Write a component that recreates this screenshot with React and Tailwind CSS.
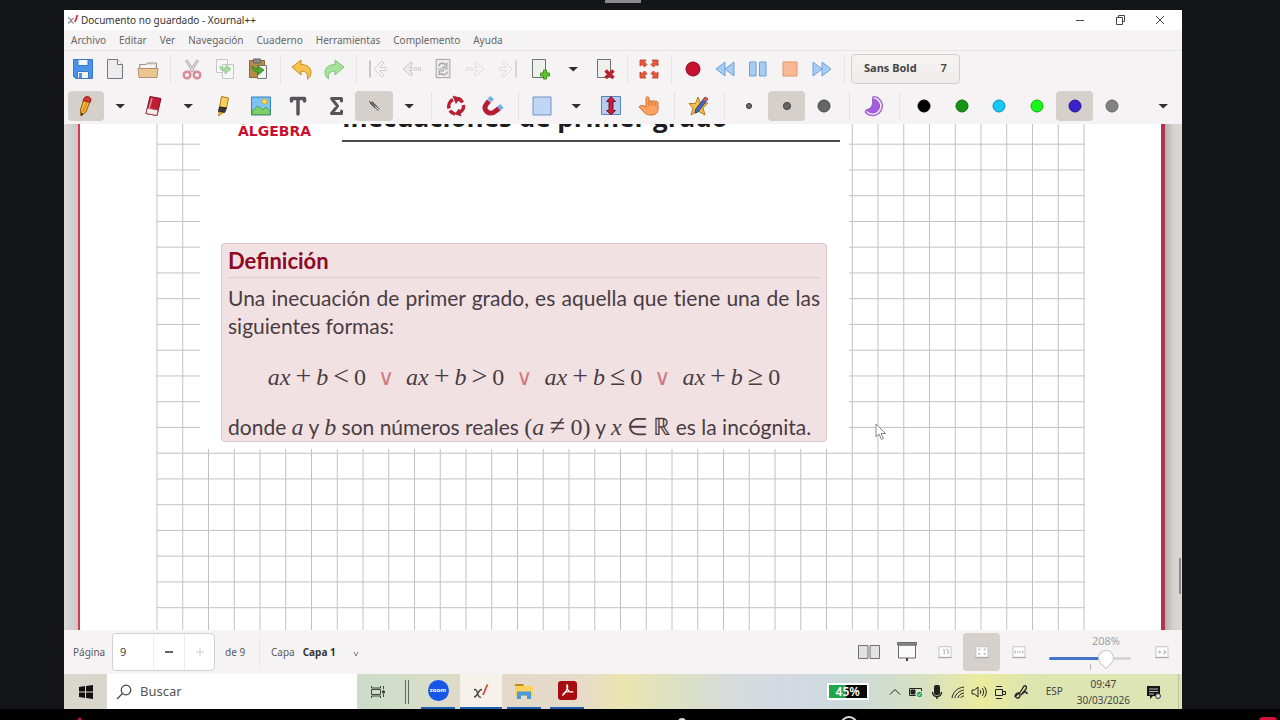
import { useState } from 'react';

// Shared wrapper for every 24px drawing in the bars
const Svg = ({ children, size = 'w-6 h-6' }) => (
  <svg viewBox="0 0 24 24" className={`${size} shrink-0`} fill="none" aria-hidden="true">
    {children}
  </svg>
);

const icons = {
  save: (
    <Svg>
      <path d="M2.500 2.500h19v19H4.500l-2-2z" fill="#4a93e8" stroke="#3a78c9" />
      <path d="M7 2.500h10v6H7z" fill="#f5f7fa" stroke="#3a78c9" />
      <path d="M6.500 14.500h11v7h-11z" fill="#f0f2f6" stroke="#3a78c9" />
      <path d="M8 16h3v5H8z" fill="#4a93e8" />
    </Svg>
  ),
  newDoc: (
    <Svg>
      <path d="M4.500 2.500h10l5 5v14h-15z" fill="#ececee" stroke="#777" />
      <path d="M14.500 2.500v5h5" fill="#fff" stroke="#777" />
    </Svg>
  ),
  open: (
    <Svg>
      <path d="M3.500 20V7.500h6l2-1.500h9V20z" fill="#e8e1d8" stroke="#9d9286" />
      <path d="M2 11.500h20l-1 9H3z" fill="#ecc592" stroke="#b3916a" />
      <path d="M5 9.500h14" stroke="#fff" strokeWidth="2" />
    </Svg>
  ),
  cut: (
    <Svg>
      <path d="M6 3l8 12M18 3l-8 12" stroke="#aaa" strokeWidth="2.800" />
      <path d="M6 3l8 12M18 3l-8 12" stroke="#e2e2e2" strokeWidth="1.200" />
      <circle cx="7" cy="18" r="3.300" stroke="#d98a95" strokeWidth="2.400" />
      <circle cx="17" cy="18" r="3.300" stroke="#d98a95" strokeWidth="2.400" />
    </Svg>
  ),
  copy: (
    <Svg>
      <path d="M3.500 2.500h11v13h-11z" fill="#f7f7f7" stroke="#c6c6c6" />
      <path d="M9.500 7.500h11v14h-11z" fill="#f7f7f7" stroke="#c6c6c6" />
      <path d="M7 9c0 4 2 5 5 5v3l6-5-5-4v3c-3 0-4 0-6-2z" fill="#a9dca3" stroke="#8cc487" strokeWidth=".8" />
    </Svg>
  ),
  paste: (
    <Svg>
      <path d="M3.500 3.500h15v17h-15z" fill="#b98a4b" stroke="#87683f" />
      <path d="M7.500 2h7v4h-7z" fill="#8b8b8b" stroke="#666" />
      <path d="M11.500 8.500h9v13h-9z" fill="#f3f3f3" stroke="#777" />
      <path d="M6 9c0 4 2 6 6 6v3l6-5-6-4v3c-3 0-4-1-6-3z" fill="#4eaa34" stroke="#2d7d19" strokeWidth=".8" />
    </Svg>
  ),
  undo: (
    <Svg>
      <path d="M2 10l9-7v4.500c7 0 10 4 10 8 0 3-1.500 5-3.500 6.500.500-5-1-8-6.500-8V18z" fill="#f8c150" stroke="#c98a1f" />
    </Svg>
  ),
  redo: (
    <Svg>
      <path d="M22 10l-9-7v4.500c-7 0-10 4-10 8 0 3 1.500 5 3.500 6.500-.500-5 1-8 6.500-8V18z" fill="#a5e29a" stroke="#83c47a" />
    </Svg>
  ),
  first: (
    <Svg>
      <path d="M4 3.500v17" stroke="#c6c6c6" strokeWidth="2" />
      <path d="M16 4l-8 8 8 8 2-2-4.500-4.500H20v-3h-6.500L18 6z" fill="#f6f5f5" stroke="#cfcfcf" />
    </Svg>
  ),
  prev: (
    <Svg>
      <path d="M12 5l-8 7 8 7 2-2-3.500-3.500H13v-3h-2.500L14 7z" fill="#ebeaea" stroke="#c9c9c9" />
      <path d="M15.500 10.500h2v3h-2zM19.500 10.500h2v3h-2z" stroke="#cfcfcf" />
    </Svg>
  ),
  gotoPage: (
    <Svg size="w-[22px] h-[22px]">
      <path d="M4.500 1.500h15v20h-15z" fill="#ececec" stroke="#9a9a9a" />
      <path d="M7 9c2-4 5-4 7-2l2-1v4h-5M17 15c-2 4-5 4-7 2l-2 1v-4h5" stroke="#a5a5a5" strokeWidth="1.500" />
      <path d="M6 12h12" stroke="#a5a5a5" />
    </Svg>
  ),
  next: (
    <Svg>
      <path d="M12 5l8 7-8 7-2-2 3.500-3.500H11v-3h2.500L10 7z" fill="#f4f2f2" stroke="#dedcdc" />
      <path d="M6.500 10.500h2v3h-2zM2.500 10.500h2v3h-2z" stroke="#e0dede" />
    </Svg>
  ),
  last: (
    <Svg>
      <path d="M20 3.500v17" stroke="#d6d4d4" strokeWidth="2" />
      <path d="M8 4l8 8-8 8-2-2 4.500-4.500H4v-3h6.500L6 6z" fill="#f6f4f4" stroke="#dddbdb" />
    </Svg>
  ),
  addPage: (
    <Svg>
      <path d="M3.500 2.500h13v18h-13z" fill="#eef0ec" stroke="#707070" />
      <path d="M14.500 13h3v3h3v3h-3v3h-3v-3h-3v-3h3z" fill="#62c52d" stroke="#3f9316" />
    </Svg>
  ),
  deletePage: (
    <Svg>
      <path d="M4.500 2.500h13v18h-13z" fill="#eef0ec" stroke="#707070" />
      <path d="M12.500 13.500l8 7.500M20.500 13.500l-8 7.500" stroke="#b5202f" strokeWidth="3.500" />
    </Svg>
  ),
  fullscreen: (
    <Svg>
      <path
        d="M3 3h6L7.500 5 10 7.500 7.500 10 5 7.500 3 9zM21 3h-6l1.500 2L14 7.500l2.500 2.500L19 7.500 21 9zM3 21h6l-1.500-2L10 16.500 7.500 14 5 16.500 3 15zM21 21h-6l1.500-2-2.500-2.500 2.500-2.500 2.500 2.500L21 15z"
        fill="#e4573d"
        stroke="#c03a25"
        strokeWidth=".8"
      />
    </Svg>
  ),
  record: (
    <Svg>
      <circle cx="12" cy="12" r="7" fill="#c4122f" stroke="#8c0d22" />
    </Svg>
  ),
  rewind: (
    <Svg>
      <path d="M12 5v14L3 12zM21 5v14l-9-7z" fill="#a8cdf5" stroke="#6d9fd6" />
    </Svg>
  ),
  pause: (
    <Svg>
      <path d="M3.500 5h6.500v14H3.500zM13.500 5H20v14h-6.500z" fill="#a8cdf5" stroke="#6d9fd6" />
    </Svg>
  ),
  stop: (
    <Svg>
      <path d="M5 5h14v14H5z" fill="#f9b995" stroke="#e09468" />
    </Svg>
  ),
  forward: (
    <Svg>
      <path d="M3 5v14l9-7zM12 5v14l9-7z" fill="#a8cdf5" stroke="#6d9fd6" />
    </Svg>
  ),
  pencil: (
    <Svg>
      <path d="M9.500 6l6.500 1.500-4 10.500L7 22l-.500-6z" fill="#f6bb3a" stroke="#8a5a12" />
      <path d="M13 7l-4 11" stroke="#e78e1c" strokeWidth="2" />
      <path d="M9.500 6c.500-5 7.500-4 7.500 0l-1 2.500-7-2z" fill="#d8322f" stroke="#8a1f1f" />
      <path d="M6.800 18.500l2.700 1.200L7 22z" fill="#3a2c1c" />
    </Svg>
  ),
  eraser: (
    <Svg>
      <path d="M8 2.500l11 2-4 17-11-2z" fill="#c11c33" stroke="#7a1020" />
      <path d="M5.200 14l11 2-1.400 5.500-10.800-2z" fill="#f6e9ea" stroke="#9a4a55" />
      <path d="M10 4l-3 11" stroke="#e88c98" strokeWidth="1.500" />
    </Svg>
  ),
  highlighter: (
    <Svg>
      <path d="M10.500 2.500l7 1.500-2 10-7-1z" fill="#fbcf5e" stroke="#a87a18" />
      <path d="M8.500 13l7 1-2 4.500-6-1z" fill="#3a3a3a" stroke="#222" />
      <path d="M8 18l4 .800L7.500 22z" fill="#f5c33c" stroke="#a87a18" strokeWidth=".8" />
    </Svg>
  ),
  image: (
    <Svg>
      <path d="M2.500 3h19v18h-19z" fill="#7cc3f5" stroke="#3b7fb8" />
      <path d="M3 17l6-5 5 4 3-3 4 4v3.500H3z" fill="#7ed069" stroke="#55a142" />
      <circle cx="15.500" cy="7.500" r="2.500" fill="#fbe06a" stroke="#d6a82a" />
    </Svg>
  ),
  text: (
    <Svg>
      <path d="M5.500 7V4.500h13V7M12 4.500v15.500" stroke="#555557" strokeWidth="3.500" strokeLinecap="round" strokeLinejoin="round" />
    </Svg>
  ),
  sigma: (
    <Svg>
      <path d="M17.500 7V4.500h-10l6 7.500-6 7.500h10V17" stroke="#555557" strokeWidth="3" strokeLinecap="round" strokeLinejoin="round" />
    </Svg>
  ),
  wand: (
    <Svg>
      <path d="M9 8l8 8" stroke="#777" strokeWidth="3" />
      <path d="M8 9l5 5M10 8l5 5M7 7l2 2" stroke="#444" />
      <path d="M13 12l4 4" stroke="#e2e2e2" />
    </Svg>
  ),
  rotate: (
    <Svg>
      <path d="M5 14.500a7.500 7.500 0 0 1 4-8.800M19.500 11a7.500 7.500 0 0 1-4 7.500M11 20a7.500 7.500 0 0 1-5-3.500M14 4.500a7.500 7.500 0 0 1 4.500 4" stroke="#bb2036" strokeWidth="3.500" />
      <path d="M9 2l7 2-4 5.500zM17 22l-6-2 4-5z" fill="#bb2036" stroke="#861426" strokeWidth=".6" />
    </Svg>
  ),
  magnet: (
    <Svg>
      <path d="M8 7l-2.500 3c-5 6 3.500 12 8.500 7.500l4-3" stroke="#b91b33" strokeWidth="5" />
      <path d="M11 3.500L8.500 6.500M21 12l-3 2.500" stroke="#6faef0" strokeWidth="5" />
    </Svg>
  ),
  select: (
    <Svg>
      <path d="M3 3h18v18H3z" fill="#bfd6f4" stroke="#6f93c6" />
    </Svg>
  ),
  vspace: (
    <Svg>
      <path d="M2.500 2.500h19v18h-19z" fill="#b3cdf2" stroke="#5f83b6" />
      <path d="M12 2.500l4.500 5H14v9h2.500L12 21l-4.500-4.500H10v-9H7.500z" fill="#c41f3d" stroke="#7d1226" />
    </Svg>
  ),
  hand: (
    <Svg>
      <path d="M9 13V4.500C9 2 12 2 12 4.500V8c0-2 3-2 3 0 0-2 3-1.500 3 0 0-1.500 3-1 3 1v6c0 4-3 6-6 6-5 0-7-1-9-4l-4-4c1-2 4-2 7 0z" fill="#fba163" stroke="#d6702b" />
      <path d="M12 8v4M15 8v4M18 8v4" stroke="#d6702b" />
    </Svg>
  ),
  favourite: (
    <Svg>
      <path d="M11 3l2.500 6H21l-5 5 2 7-7-4-7 4 2-7-4-4.500h6.500z" fill="#f7bf4c" stroke="#b07c1c" />
      <path d="M18 3l3 2-10 13-3 1 .500-3.500z" fill="#4c65b8" stroke="#2f3f7d" />
      <path d="M18 3l3 2-2 2.500-3-2z" fill="#cf5a4c" />
    </Svg>
  ),
  setsquare: (
    <Svg>
      <path d="M11 2.500a9.500 9.500 0 1 1-8 15" stroke="#a968dd" strokeWidth="1.500" />
      <path d="M10.500 5a7 7 0 1 1-6 10.500c4 0 7-4 6-10.500z" fill="#a45ddc" stroke="#8f4fc6" />
      <path d="M11 2.500v3M3 17.500l2.500-1.500" stroke="#a968dd" strokeWidth="1.500" />
    </Svg>
  ),
  arrow: (
    <Svg>
      <path d="M7.500 10h9.500l-4.750 4.500z" fill="#2f2f2f" />
    </Svg>
  ),
  pair: (
    <Svg>
      <path d="M1.500 5.500h9.500v13H1.500zM13 5.500h9.500v13H13z" fill="#e2e2e2" stroke="#707070" />
    </Svg>
  ),
  screen: (
    <Svg>
      <path d="M3.500 5h17v13h-17z" fill="#fafafa" stroke="#6a6a6a" />
      <path d="M2.500 2.500h19v2.500h-19z" fill="#888" stroke="#6a6a6a" />
      <path d="M12 18v3" stroke="#444" strokeWidth="2" />
    </Svg>
  ),
};

const zoomBox = (d) => (
  <Svg size="w-[18px] h-[18px]">
    <path d="M4 5h16v14H4z" fill="#fff" stroke="#c4c2c2" strokeWidth="1.300" />
    <path d="M3 19.500h18" stroke="#a9a7a7" strokeWidth="1.500" />
    <path d={d} stroke="#b3b1b1" strokeWidth="1.500" />
  </Svg>
);

const dot = (r, fill, stroke) => (
  <Svg>
    <circle cx="12" cy="12" r={r} fill={fill} stroke={stroke} />
  </Svg>
);

const ToolButton = ({ label, children, active, width = 'flex-1', height = 'h-[30px]' }) => (
  <button
    aria-label={label}
    className={`${width} ${height} flex items-center justify-center rounded ${active ? 'bg-[#d5d0cc]' : ''}`}
  >
    {children}
  </button>
);

const Sep = () => (
  <div className="w-3 flex justify-center shrink-0">
    <div className="w-px h-7 bg-[#e6e2e2]" />
  </div>
);

const Group = ({ width, items }) => (
  <div className={`${width} flex shrink-0`}>
    {items.map(([name, label, active]) => (
      <ToolButton key={name} label={label} active={active}>
        {icons[name]}
      </ToolButton>
    ))}
  </div>
);

const Dropdown = ({ label }) => (
  <ToolButton label={label} width="w-8 shrink-0">
    {icons.arrow}
  </ToolButton>
);

const menus = ['Archivo', 'Editar', 'Ver', 'Navegación', 'Cuaderno', 'Herramientas', 'Complemento', 'Ayuda'];

const colors = [
  ['Negro', '#000000', '#000000'],
  ['Verde', '#149414', '#0c6a0c'],
  ['Celeste', '#14c8f8', '#0f8fb2'],
  ['Verde claro', '#18f818', '#11b011'],
  ['Azul', '#3a22c8', '#25168a'],
  ['Gris', '#828282', '#636363'],
];

const TitleBar = () => (
  <header className="h-5 bg-white flex items-center pl-[3px] pr-[2px] shrink-0">
    <svg viewBox="0 0 12 12" className="w-3 h-3 mr-[2px]" fill="none" aria-hidden="true">
      <path d="M1 4c3-1 3 6 6 5M7 4C4 5 4 9 1 9" stroke="#8a8a8a" strokeWidth="1.300" />
      <path d="M10.500 1L8 8" stroke="#d4313f" strokeWidth="1.800" />
    </svg>
    <h1 className="text-[10px] leading-5 text-[#333]">Documento no guardado - Xournal++</h1>
    <div className="ml-auto flex">
      <button aria-label="Minimizar" className="w-10 h-5 flex items-center justify-center">
        <svg viewBox="0 0 10 10" className="w-[10px] h-[10px]" stroke="#444"><path d="M1 5.500h8" /></svg>
      </button>
      <button aria-label="Restaurar" className="w-10 h-5 flex items-center justify-center">
        <svg viewBox="0 0 10 10" className="w-[10px] h-[10px]" stroke="#444" fill="none">
          <path d="M1.500 2.500h6v7h-6zM3.500 2.500v-2h6v6h-2" />
        </svg>
      </button>
      <button aria-label="Cerrar" className="w-10 h-5 flex items-center justify-center">
        <svg viewBox="0 0 10 10" className="w-[10px] h-[10px]" stroke="#444"><path d="M1 1l8 8M9 1L1 9" /></svg>
      </button>
    </div>
  </header>
);

const MainToolbar = () => (
  <div className="h-9 pl-[3px] flex items-center border-t border-[#e9e5e5] shrink-0">
    <Group width="w-[97px]" items={[['save', 'Guardar'], ['newDoc', 'Nuevo'], ['open', 'Abrir']]} />
    <Sep />
    <Group width="w-[98px]" items={[['cut', 'Cortar'], ['copy', 'Copiar'], ['paste', 'Pegar']]} />
    <Sep />
    <Group width="w-16" items={[['undo', 'Deshacer'], ['redo', 'Rehacer']]} />
    <Sep />
    <Group
      width="w-[195px]"
      items={[
        ['first', 'Primera página'],
        ['prev', 'Página anterior'],
        ['gotoPage', 'Ir a la página'],
        ['next', 'Página siguiente'],
        ['last', 'Última página'],
        ['addPage', 'Añadir página'],
      ]}
    />
    <Dropdown label="Tipo de página" />
    <Group width="w-8" items={[['deletePage', 'Borrar página']]} />
    <Sep />
    <Group width="w-8" items={[['fullscreen', 'Pantalla completa']]} />
    <Sep />
    <Group
      width="w-[161px]"
      items={[
        ['record', 'Grabar'],
        ['rewind', 'Retroceder'],
        ['pause', 'Pausa'],
        ['stop', 'Detener'],
        ['forward', 'Avanzar'],
      ]}
    />
    <Sep />
    <button className="h-[30px] ml-px px-3 flex items-center gap-6 rounded border border-[#d3cecd] bg-gradient-to-b from-[#f6f4f3] to-[#efeceb] text-[11px] font-bold text-[#444]">
      <span>Sans Bold</span>
      <span className="font-semibold">7</span>
    </button>
  </div>
);

const PenToolbar = () => (
  <div className="h-[38px] pt-[2px] pl-1 pr-[3px] flex items-center shrink-0">
    <Group width="w-9" items={[['pencil', 'Lápiz', true]]} />
    <Dropdown label="Opciones del lápiz" />
    <Group width="w-9" items={[['eraser', 'Borrador']]} />
    <Dropdown label="Opciones del borrador" />
    <Group
      width="w-[189px]"
      items={[
        ['highlighter', 'Resaltador'],
        ['image', 'Imagen'],
        ['text', 'Texto'],
        ['sigma', 'Fórmula'],
        ['wand', 'Formas', true],
      ]}
    />
    <Dropdown label="Opciones de formas" />
    <Sep />
    <Group width="w-[75px]" items={[['rotate', 'Ajustar rotación'], ['magnet', 'Ajustar a la cuadrícula']]} />
    <Sep />
    <Group width="w-9" items={[['select', 'Seleccionar']]} />
    <Dropdown label="Opciones de selección" />
    <Group width="w-[76px]" items={[['vspace', 'Espacio vertical'], ['hand', 'Mano']]} />
    <Sep />
    <Group width="w-[38px]" items={[['favourite', 'Predeterminado']]} />
    <Sep />
    <div className="w-[113px] flex shrink-0">
      <ToolButton label="Fino">{dot(2.6, '#666', '#444')}</ToolButton>
      <ToolButton label="Medio" active>{dot(3.6, '#666', '#444')}</ToolButton>
      <ToolButton label="Grueso">{dot(6, '#666', '#444')}</ToolButton>
    </div>
    <Sep />
    <Group width="w-[38px]" items={[['setsquare', 'Transportador']]} />
    <Sep />
    <div className="w-[226px] flex shrink-0">
      {colors.map(([name, fill, stroke]) => (
        <ToolButton key={name} label={name} active={name === 'Azul'}>
          {dot(6, fill, stroke)}
        </ToolButton>
      ))}
    </div>
    <div className="ml-auto">
      <Dropdown label="Más colores" />
    </div>
  </div>
);

// Squared paper: 37 vertical rules, rows every 25.75 units
const Grid = () => (
  <svg className="absolute top-0 left-[76px] w-[930px] h-full" aria-hidden="true">
    {Array.from({ length: 37 }, (_, i) => (
      <line key={`v${i}`} x1={1 + i * 25.75} x2={1 + i * 25.75} y1="0" y2="100%" stroke="#c2c2c2" />
    ))}
    {Array.from({ length: 40 }, (_, i) => (
      <line key={`h${i}`} x1="0.500" x2="928.500" y1={20.2 + i * 25.75} y2={20.2 + i * 25.75} stroke="#c2c2c2" />
    ))}
  </svg>
);

const V = ({ children }) => <i className="font-['Liberation_Serif',serif] text-2xl leading-7">{children}</i>;
const M = ({ children }) => <span className="font-['Liberation_Serif',serif] text-2xl leading-7">{children}</span>;
const Op = ({ children }) => (
  <span className="font-['Liberation_Serif',serif] text-[28px] leading-7">{children}</span>
);

const Inequality = ({ sign }) => (
  <span className="flex items-baseline gap-[5px]">
    <V>ax</V>
    <Op>+</Op>
    <V>b</V>
    <Op>{sign}</Op>
    <M>0</M>
  </span>
);

const Or = () => <span className="font-['DejaVu_Sans',sans-serif] text-[22px] leading-7 text-[#cf7a80]">∨</span>;

const Slide = () => (
  <article className="relative ml-[120px] w-[649px] h-[325px] bg-white overflow-hidden">
    <div className="flex -mt-4 items-end">
      <div className="ml-[38px] w-[104px] pb-[3px] font-['DejaVu_Sans',sans-serif] text-sm leading-4 font-bold text-[#c8102e]">
        ÁLGEBRA
      </div>
      <h2 className="w-[498px] h-[34px] border-b-2 border-[#4a4a4a] font-['Open_Sans',sans-serif] text-[26px] leading-[18px] font-bold text-[#1c1c1c] whitespace-nowrap">
        Inecuaciones de primer grado
      </h2>
    </div>
    <section className="ml-[21px] mr-[22px] mt-[101px] h-[199px] px-[6px] rounded border border-[#dcc5c9] bg-[#f2e1e3] font-['Lato',sans-serif] text-[21px] leading-7 text-[#483c42]">
      <h3 className="h-[34px] leading-[34px] text-[22px] font-bold text-[#8c0a25] border-b border-[#e0cdd0]">Definición</h3>
      <p className="mt-[6px] text-justify [font-variant-ligatures:none]">
        Una inecuación de primer grado, es aquella que tiene una de las siguientes formas:
      </p>
      <div className="mt-[22px] h-7 flex items-baseline justify-center gap-3">
        <Inequality sign="<" />
        <Or />
        <Inequality sign=">" />
        <Or />
        <Inequality sign="≤" />
        <Or />
        <Inequality sign="≥" />
      </div>
      <p className="mt-[22px] whitespace-nowrap">
        donde <V>a</V> y <V>b</V> son números reales <M>(</M><V>a</V> <Op>≠</Op> <M>0)</M> y <V>x</V> <M>∈</M> <M>ℝ</M> es la incógnita.
      </p>
    </section>
  </article>
);

const StatusBar = () => {
  const [page, setPage] = useState(9);
  const [zoom, setZoom] = useState(74);
  return (
    <div className="h-11 bg-[#f6f3f4] flex items-center px-[9px] text-[10px] text-[#5a5a5a] shrink-0">
      <label htmlFor="page" className="w-[39px]">Página</label>
      <div className="h-[38px] flex items-stretch rounded border border-[#d5d1d0] bg-white text-[#444]">
        <input
          id="page"
          value={page}
          onChange={(e) => setPage(e.target.value)}
          className="w-10 pl-[7px] text-[11px] outline-none bg-transparent"
        />
        <button aria-label="Restar" className="w-[31px] border-l border-[#eeecec] flex items-center justify-center">
          <svg viewBox="0 0 10 10" className="w-[10px]" stroke="#333" strokeWidth="1.500"><path d="M1 5h8" /></svg>
        </button>
        <button aria-label="Sumar" className="w-[30px] border-l border-[#eeecec] flex items-center justify-center">
          <svg viewBox="0 0 10 10" className="w-[10px]" stroke="#ccc"><path d="M1 5h8M5 1v8" /></svg>
        </button>
      </div>
      <span className="ml-[10px] w-7">de 9</span>
      <Sep />
      <span className="ml-[6px]">Capa</span>
      <button className="ml-2 flex items-center text-[#333] font-bold">
        Capa 1
        <svg viewBox="0 0 8 8" className="w-2 h-2 ml-4 mt-1" fill="none" stroke="#777"><path d="M2 2l2 4 2-4" /></svg>
      </button>
      <div className="ml-auto flex items-center">
        <ToolButton label="Páginas pareadas" width="w-[38px]">{icons.pair}</ToolButton>
        <ToolButton label="Presentación" width="w-[38px]">{icons.screen}</ToolButton>
        <ToolButton label="Tamaño original" width="w-[37px]">{zoomBox('M9 9h2v6M14 8l2 2v5')}</ToolButton>
        <ToolButton label="Ajustar zoom" width="w-[37px]" height="h-[38px]" active>
          {zoomBox('M8 10V8h2M14 8h2v2M16 13v2h-2M10 15H8v-2')}
        </ToolButton>
        <ToolButton label="Ajustar ancho" width="w-[37px]">{zoomBox('M7 10v4M17 10v4M9 12h6')}</ToolButton>
      </div>
      <div className="ml-3 w-[82px] flex flex-col items-center">
        <label htmlFor="zoom" className="ml-8 leading-3 text-[11px] text-[#a3a1a1]">208%</label>
        <input
          id="zoom"
          type="range"
          value={zoom}
          onChange={(e) => setZoom(e.target.value)}
          className="mt-[10px] w-full h-[3px] appearance-none rounded bg-[linear-gradient(90deg,#4474c8_65%,#d9d5d5_65%)] [&::-webkit-slider-thumb]:appearance-none [&::-webkit-slider-thumb]:w-4 [&::-webkit-slider-thumb]:h-4 [&::-webkit-slider-thumb]:rotate-45 [&::-webkit-slider-thumb]:rounded-[50%_50%_2px_50%] [&::-webkit-slider-thumb]:border [&::-webkit-slider-thumb]:border-[#cbc7c6] [&::-webkit-slider-thumb]:bg-white"
        />
        <div className="mt-1 w-px h-[6px] bg-[#b5b3b3]" />
      </div>
      <button aria-label="Acercar" className="ml-5 w-[22px] flex justify-center">{zoomBox('M7 12h4M9 10v4M14 10l3 2-3 3')}</button>
    </div>
  );
};

const TaskItem = ({ label, active, children }) => (
  <button
    aria-label={label}
    className={`h-full w-[42px] flex flex-col items-center ${active ? 'bg-[#f7f1ec]' : ''}`}
  >
    <span className="flex-1 flex items-center">{children}</span>
    <span className={`h-[2px] bg-[#1d5fae] ${active ? 'w-full' : 'w-[34px]'}`} />
  </button>
);

const TrayIcon = ({ label, children }) => (
  <button aria-label={label} className="w-[21px] h-6 flex items-center justify-center">
    <svg viewBox="0 0 16 16" className="w-4 h-4" fill="none" stroke="#222" aria-hidden="true">
      {children}
    </svg>
  </button>
);

const Taskbar = () => (
  <footer className="h-[35px] flex items-center shrink-0 text-[#444] bg-[linear-gradient(90deg,#dad6cb_0%,#cddcc8_27%,#d3dec8_31%,#e4d9c8_37%,#e6dacb_46%,#ebe4b0_50%,#dde1c0_54%,#d6dbdc_60%,#d4d9e2_65%,#cbdadb_70%,#d8e1c0_77%,#ebeb9e_82%,#dde5ae_86%,#dde5b8_100%)]">
    <button aria-label="Inicio" className="w-[43px] flex justify-center">
      <svg viewBox="0 0 14 14" className="w-[14px] h-[14px]" fill="#111">
        <path d="M0 2l6-1v5.500H0zM7 .9L14 0v6.500H7zM0 7.500h6V13l-6-1zM7 7.500h7V14l-7-.9z" />
      </svg>
    </button>
    <label className="w-[250px] h-full bg-white flex items-center pl-[9px] gap-2">
      <svg viewBox="0 0 16 16" className="w-4 h-4 shrink-0" fill="none" stroke="#444" strokeWidth="1.200">
        <circle cx="10" cy="6" r="4.800" />
        <path d="M6.500 9.500L1 15" />
      </svg>
      <input aria-label="Buscar" placeholder="Buscar" className="w-40 text-[13px] outline-none placeholder:text-[#555]" />
    </label>
    <button aria-label="Vista de tareas" className="w-[42px] flex justify-center">
      <svg viewBox="0 0 16 16" className="w-4 h-4" fill="none" stroke="#444">
        <path d="M1.500 2v2h9V2M1.500 14v-2h9v2M1.500 5.500h9v5h-9z" />
        <path d="M13.500 2v12" strokeDasharray="3 1" />
        <path d="M12.500 7h2v2h-2z" fill="#333" />
      </svg>
    </button>
    <div className="ml-[6px] mr-2 w-1 h-6 border-x border-[#666]" />
    <div className="h-full flex gap-px">
      <TaskItem label="Zoom">
        <span className="w-[21px] h-[21px] rounded-full bg-[#1656e8] text-white text-[6px] leading-[20px] font-bold text-center">zoom</span>
      </TaskItem>
      <TaskItem label="Xournal++" active>
        <svg viewBox="0 0 16 16" className="w-4 h-4" fill="none">
          <path d="M1 7c4-3 3 9 7 7M9 6.500C5 6 5 14 1 14" stroke="#444" strokeWidth="1.300" />
          <path d="M14.500 1.500L10 12" stroke="#cf4a3c" strokeWidth="1.800" />
        </svg>
      </TaskItem>
      <TaskItem label="Explorador">
        <svg viewBox="0 0 20 18" className="w-5 h-[18px]">
          <path d="M1 2h8l1 2H1z" fill="#c58a17" />
          <path d="M1 4h18v10H1z" fill="#fbd35c" />
          <path d="M3 17V9.500h14V17h-4v-3.500H7V17z" fill="#4a9ad8" />
        </svg>
      </TaskItem>
      <TaskItem label="Acrobat">
        <svg viewBox="0 0 19 19" className="w-[19px] h-[19px]" fill="none">
          <rect width="19" height="19" rx="3" fill="#a80a12" />
          <path d="M9 4c2 2-1 7-4 10 0-3 5-4 9-3-3 1-6-4-5-7z" stroke="#fff" strokeWidth="1.300" />
        </svg>
      </TaskItem>
    </div>
    <div className="ml-auto flex items-center">
      <div className="mr-4 w-[42px] h-[17px] border-2 border-white bg-[linear-gradient(90deg,#1fa648_45%,#0a0a0a_45%)] text-white text-xs leading-[13px] font-semibold text-center">
        45%
      </div>
      <div className="flex">
        <TrayIcon label="Mostrar iconos"><path d="M3 10.500l5-5 5 5" /></TrayIcon>
        <TrayIcon label="Dispositivo">
          <path d="M1.500 4.500h12v7h-12z" /><path d="M3 6h4v4H3z" fill="#222" />
          <circle cx="11.500" cy="10.500" r="3.500" fill="#2fa84f" stroke="#fff" /><path d="M10 10.500l1 1 2-2" stroke="#fff" />
        </TrayIcon>
        <TrayIcon label="Micrófono">
          <rect x="5.500" y="1.500" width="5" height="9" rx="1" fill="#222" />
          <path d="M3.500 8c0 6 9 6 9 0M8 12v3" strokeWidth="1.500" />
        </TrayIcon>
        <TrayIcon label="Wi-Fi">
          <path d="M2 14C3 8 7 4 14 3M5 14c.500-4 4-7 9-8M8 14c.500-3 3-4.500 6-5M11 14c0-1 1-2 3-2" />
        </TrayIcon>
        <TrayIcon label="Volumen">
          <path d="M1 6h2.500L7 3v10l-3.500-3H1zM9 6c1 1 1 3 0 4M11 4c2 2 2 6 0 8M13 2.500c3 3 3 8 0 11" />
        </TrayIcon>
        <TrayIcon label="Cámara">
          <path d="M3.500 5.500h7v6h-7zM10.500 7.500h3v3h-3M4 2.500h6M4 14.500h6" />
        </TrayIcon>
        <TrayIcon label="Lápiz táctil">
          <path d="M2 13c0-4 5-6 5-2s-5 4-4 1c2-3 3-1 5-5l3-5c2-1 3 1 2 3l-5 6c3-3 4-4 5-3s0 2 2 1" strokeWidth="1.300" />
        </TrayIcon>
      </div>
      <span className="ml-[14px] text-[10px]">ESP</span>
      <div className="ml-[14px] text-[10px] leading-4 text-center">
        <div>09:47</div>
        <div>30/03/2026</div>
      </div>
      <button aria-label="Notificaciones" className="mx-4">
        <svg viewBox="0 0 16 16" className="w-4 h-4" fill="none">
          <path d="M1 2h13v10H7l-3 3v-3H1z" fill="#161616" />
          <path d="M3 5h9M3 7.500h9M3 10h5" stroke="#bbb" />
          <circle cx="12" cy="12" r="2.500" fill="#ddd" stroke="#333" />
        </svg>
      </button>
      <div className="w-px h-[35px] mr-[3px] bg-[#bcc49c]" />
    </div>
  </footer>
);

const App = () => {
  return (
    <div className="h-screen flex flex-col overflow-hidden bg-[#131518] font-['Noto_Sans','Open_Sans',sans-serif]">
      <div className="h-[10px] flex justify-center pr-[34px] shrink-0">
        <div className="w-9 h-[3px] bg-[#8a8a8c]" />
      </div>
      <div className="flex-1 min-h-0 ml-16 mr-[98px] flex flex-col bg-[#f6f3f4]">
        <TitleBar />
        <nav className="h-5 px-[7px] flex items-center gap-[13px] text-[10px] text-[#666] shrink-0">
          {menus.map((m) => (
            <button key={m}>{m}</button>
          ))}
        </nav>
        <MainToolbar />
        <PenToolbar />
        <main className="flex-1 min-h-0 flex bg-[#d9d5d3] overflow-hidden">
          <div className="w-[14px] bg-gradient-to-r from-[#dcd9d8] to-[#cbc7c6]" />
          <div className="relative flex-1 bg-white border-l-2 border-r-4 border-l-[#d63a50] border-r-[#b03350]">
            <Grid />
            <Slide />
            <svg viewBox="0 0 12 18" className="absolute left-[795px] top-[299px] w-3 h-[18px]">
              <path d="M1 1v13l3-3 2.500 5.500 2-1L6 10.500h4.500z" fill="#fff" stroke="#888" />
            </svg>
          </div>
          <div className="w-[17px] flex justify-end items-end bg-gradient-to-r from-[#b5b0ac] via-[#d6d3ce] to-[#dcd9d4]">
            <div className="w-[2px] h-9 mr-px mb-9 bg-[#8b8b8b]" />
          </div>
        </main>
        <StatusBar />
        <Taskbar />
      </div>
      <svg viewBox="0 0 1280 11" className="w-full h-[11px] bg-black shrink-0" aria-hidden="true">
        <path d="M77 11l3-3 2 3z" fill="#c4103c" />
        <circle cx="682" cy="13" r="4" fill="#ddd" />
        <circle cx="849" cy="16" r="8" fill="none" stroke="#ddd" strokeWidth="2" />
        <rect x="1259" y="8" width="18" height="8" rx="4" fill="#d4103c" />
      </svg>
    </div>
  );
};

export default App;
